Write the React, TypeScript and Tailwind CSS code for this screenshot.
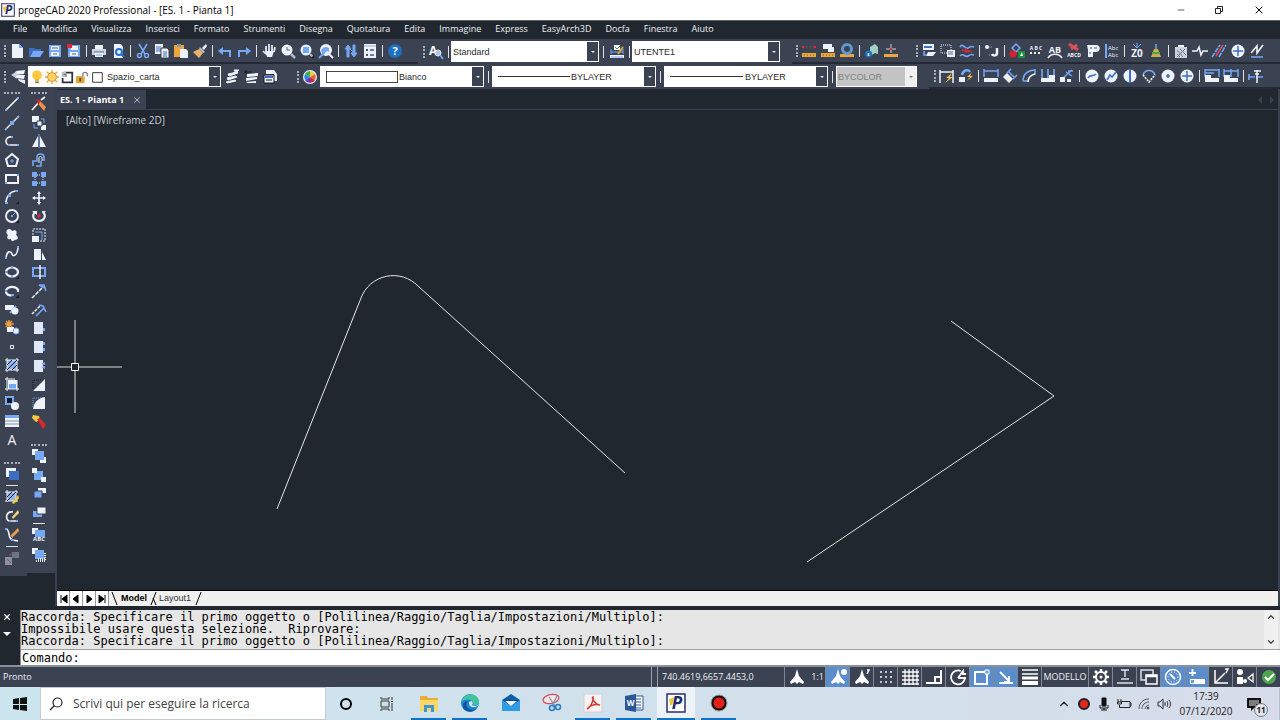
import React from 'react';
import { Minus, X, ChevronUp, ChevronDown } from 'lucide-react';

const W = '#eef2fb';
const B = '#76a8f8';
const D = '#3c6fc4';
const K = '#141a22';

const line = { fill: 'none', strokeWidth: 1.6 };

const icons: Record<string, React.ReactNode> = {
  // standard
  new: <><path d="M3 1h7l4 4v10H3z" fill={W} /><path d="M10 1v4h4z" fill={B} /></>,
  open: <><path d="M1 5h5l1 1h6v3H4l-2 5H1z" fill={D} /><path d="M5 8h11l-4 6H2z" fill={B} /></>,
  save: <><path d="M2 2h12v12H2z" fill={B} /><path d="M4 3h8v4H4zM4 9h8v4H4z" fill={W} /><path d="M5 5h6M6 11h4" stroke={D} /></>,
  saveAs: <><path d="M2 2h12v12H2z" fill={B} /><path d="M5 3h7v4H5zM4 9h8v4H4z" fill={W} /><path d="M6 11h4" stroke={D} /><path d="M1 1h5v4H1z" fill="#d8283a" /></>,
  print: <><path d="M4 2h8v4H4z" fill={W} /><path d="M1 6h14v6H1z" fill="#cfd6e4" /><path d="M4 9h8v5H4z" fill={W} /><path d="M3 9h10" stroke="#5b6678" /><path d="M5 12h6" stroke={B} /></>,
  preview: <><path d="M4 1h7l2 3v11H4z" fill={W} /><circle cx="9" cy="9" r="3" fill="none" stroke="#1f6fd0" strokeWidth="2" /><path d="M11 11l3 3" stroke="#1f6fd0" strokeWidth="2" /></>,
  cut: <><path d="M4 1l6 10M12 1L6 11" stroke={B} strokeWidth="1.6" /><circle cx="4.5" cy="12.5" r="2" fill="none" stroke={B} strokeWidth="1.5" /><circle cx="11.5" cy="12.5" r="2" fill="none" stroke={B} strokeWidth="1.5" /></>,
  copy: <><path d="M1 1h8v10H1z" fill={W} /><path d="M2 4h5M2 6h5M2 8h5" stroke={D} /><path d="M7 5h6l2 2v8H7z" fill={W} stroke="#3b4252" /><path d="M9 9h4M9 11h4M9 13h4" stroke={D} /></>,
  paste: <><path d="M1 2h10v12H1z" fill="#eda63c" /><path d="M4 1h4v3H4z" fill="#8c93a3" /><path d="M7 6h6l2 2v7H7z" fill={W} /></>,
  brush: <><path d="M10 5l4-4 1 2-3 4z" fill={W} /><path d="M8 4l5 5-2 1-4-4z" fill="#b9c0cc" /><path d="M7 6l4 4-4 5-6-6z" fill="#e2b568" /></>,
  undo: <path d="M6 4L1 8l5 4V9h6v5h2V7H6z" fill={B} />,
  redo: <path d="M10 4l5 4-5 4V9H4v5H2V7h8z" fill={B} />,
  pan: <><path d="M5 3v5M8 1v7M11 2v6M14 4l-1 5M2 8l3 3" stroke={W} strokeWidth="1.7" fill="none" /><path d="M4 8h9l-2 6H6z" fill={W} /></>,
  zoomWin: <><circle cx="7" cy="7" r="5.5" fill={W} /><path d="M7 4v3h3" stroke="#5b6678" fill="none" /><path d="M11 11l4 4" stroke="#b3bac8" strokeWidth="2.5" /></>,
  zoomExt: <><circle cx="7" cy="7" r="5.5" fill={W} /><path d="M4 4h6v6H4z" fill={B} /><path d="M11 11l3 3" stroke="#b3bac8" strokeWidth="2" /><path d="M12 15h3v-3z" fill={K} /></>,
  zoomPrev: <><circle cx="8" cy="7" r="6" fill={W} /><path d="M3 8c1-4 5-5 8-3v4L9 8 5 12z" fill={B} /><path d="M11 11l4 4" stroke={W} strokeWidth="2" /><path d="M1 15l5-5" stroke={B} strokeWidth="2" /></>,
  refresh: <path d="M4 14V6H2l3-4 3 4H6v8zM10 2h2v8h2l-3 4-3-4h2zM7 6l3 3" fill={B} stroke={B} />,
  props: <><path d="M2 1h12v14H2z" fill={W} /><path d="M2 3h12" stroke="#9fa8b8" /><path d="M4 6h2v2H4zM4 11h2v2H4z" fill="#4c5870" /><path d="M8 7h4M8 12h4" stroke="#4c5870" strokeWidth="1.5" /></>,
  help: <><circle cx="8" cy="8" r="7" fill="#1b70c4" /><text x="8" y="12" fontSize="11" fontWeight="bold" textAnchor="middle" fill="#fff">?</text></>,
  // styles
  textStyle: <><text x="1" y="11" fontSize="12" fontWeight="bold" fill="#fff">A</text><circle cx="10" cy="9" r="3" fill="#a9c4ee" stroke={W} /><path d="M12 11l3 4" stroke={B} strokeWidth="2" /></>,
  dimStyle: <><path d="M2 5v5M14 5v5M2 8h12" stroke={B} /><path d="M5 1h6v5H5z" fill={W} /><path d="M6 3l2 2 3-3" stroke="#35a04a" fill="none" /><path d="M9 10l5-7" stroke="#e2a43c" strokeWidth="2" /><path d="M1 11h14v3H1z" fill={W} /><path d="M2 13h12" stroke={B} /></>,
  distance: <><path d="M1 10h14v4H1z" fill="#eda63c" /><path d="M3 12h1M6 12h1M9 12h1M12 12h1" stroke="#7a5212" /><path d="M2 4h12" stroke="#8a4450" strokeDasharray="2 1" /><path d="M1 3h2v2H1zM13 3h2v2h-2z" fill="#e2283a" /></>,
  area: <><path d="M1 10h14v4H1z" fill="#eda63c" /><path d="M3 12h1M6 12h1M9 12h1M12 12h1" stroke="#7a5212" /><path d="M3 1h9v3h2v5H8V6H3z" fill={W} /></>,
  massProp: <><path d="M1 11h14v3H1z" fill="#eda63c" /><circle cx="8" cy="6" r="4.5" fill="none" stroke="#5e9ad0" strokeWidth="3" /></>,
  listInfo: <><path d="M6 4l5-3v9l-5 3zM11 1l3 3v7l-3-1z" fill="#9fd0c8" /><circle cx="4.5" cy="11" r="3.5" fill="#1b70c4" /><path d="M4.5 10v3" stroke="#fff" strokeWidth="1.5" /></>,
  idPoint: <><path d="M1 11h14v3H1z" fill="#eda63c" /><path d="M8 1v9M3 6h10" stroke="#d8cfd8" /><path d="M7 5h2v2H7z" fill="#e2283a" /></>,
  attach: <><path d="M2 1h11v6H2z" fill={W} /><path d="M3 4h8" stroke={D} strokeWidth="2" /><path d="M7 9h8l-3 4H5z" fill={W} /><path d="M3 8v4h3" stroke={B} {...line} /></>,
  clip: <><path d="M1 2h10v8H1z" fill="none" stroke={W} strokeDasharray="1 1" /><path d="M7 7h8v7H7z" fill={W} /><path d="M8 9h5M8 11h5" stroke="#5b6678" /></>,
  adjust: <><path d="M1 4c3-5 5 3 8 1s4-2 6-1M1 13c3-4 5 2 8 0s4-2 6-1" stroke={B} {...line} /><path d="M3 8c2-3 4 2 6 0l4 1M7 5v4l4-1" stroke="#d8283a" {...line} /></>,
  frame: <><circle cx="3" cy="4" r="2" fill={W} /><path d="M5 4h4M5 12h5" stroke={B} strokeDasharray="1 1" /><path d="M13 5v5c0 3-4 3-5 1" fill="none" stroke={W} strokeWidth="2.5" /></>,
  // express
  shapes: <><path d="M7 1l4 4-4 4-4-4z" fill="none" stroke={B} strokeWidth="1.5" /><circle cx="4" cy="11" r="3.5" fill="#d82030" /><path d="M9 8h7v7H9z" fill="#18903a" /><path d="M11 13l2-4 1 4z" fill={W} /></>,
  dots: <><path d="M2 10h12" stroke={W} strokeWidth="2" strokeDasharray="2 2" /><text x="8" y="7" fontSize="5" fill={W} fontWeight="bold" textAnchor="middle">A B C</text></>,
  arcText: <><text x="8" y="10" fontSize="9" textAnchor="middle" fill={W} fontWeight="bold">AB</text><path d="M1 15c3-5 11-5 14 0" stroke={W} {...line} /></>,
  explode: <><path d="M3 1l9 6M5 6l6-4" stroke="#d8505a" strokeWidth="3" /><text x="8" y="14" fontSize="5" textAnchor="middle" fill={W} fontWeight="bold">ABCD</text></>,
  numbering: <><path d="M2 2h9c5 0 5 7 0 7H8v5H3V7z" fill={W} /><path d="M5 5h2M9 5h3M4 10h2" stroke="#4c5870" /></>,
  abcAlign: <><path d="M2 1v14" stroke={B} strokeWidth="2" /><text x="4" y="7" fontSize="6" fill={W}>Abc</text><text x="4" y="14" fontSize="6" fill={W}>Abc</text></>,
  zZero: <><text x="8" y="14" fontSize="10" textAnchor="middle" fill={W} fontWeight="bold">Z0</text><path d="M4 1l4 4 4-4M8 0v4" stroke={B} fill="none" /></>,
  purge: <><path d="M8 1v6" stroke={B} strokeWidth="1.5" /><path d="M6 6h4l3 8H3z" fill="#c8b04a" /><path d="M4 10h8" stroke="#58a048" strokeWidth="2" /></>,
  hatchBag: <><path d="M5 2h6v3H5z" fill={W} /><path d="M2 4h12v11H2z" fill="#cdd3dd" /><path d="M4 7l6 7M4 11l3 3M7 6l6 6M12 6l-8 8" stroke="#6c7688" /></>,
  breakLine: <path d="M0 8h5l2-4 2 8 2-4h5" stroke={W} {...line} />,
  parallel: <><path d="M1 14L9 2M8 14L15 2" stroke={B} strokeWidth="1.5" strokeDasharray="5 1" /><path d="M5 13l7-11" stroke="#d8505a" strokeWidth="1.5" /></>,
  center: <><circle cx="8" cy="8" r="6.5" fill={W} /><path d="M8 3v10M3 8h10" stroke={D} strokeWidth="1.5" /></>,
  superLine: <><path d="M2 10L8 3v7l6-8" stroke={W} {...line} /><path d="M2 14h12" stroke={B} strokeWidth="1.5" /></>,
  // layers / colours
  layers: <><path d="M6 2l9-1-1 4-10 1zM5 6l10 0-1 4-9-1zM8 10l7 1v4l-6-3z" fill={W} /><path d="M1 6l6-4-1 7z" fill="#cbd3e0" /></>,
  layerCur: <path d="M4 5l9-2 1 1-9 3zM3 9l9-2 1 1-9 3zM2 13l9-2 1 1-9 2zM10 1h5l-3 3z" fill={W} stroke={W} />,
  layerPrev: <><path d="M4 5l11-1v3L4 8zM3 9l11-1v2L3 12zM3 13l10-1v2H4z" fill={W} /><path d="M1 3h8M4 1L2 3l2 2" stroke={K} fill="none" /></>,
  layerState: <><path d="M4 1h8l3 4v7h-3V5H4z" fill={W} /><path d="M2 6h10v8H2z" fill={W} stroke={K} /><path d="M3 8h8" stroke={D} strokeWidth="2" /><path d="M4 11h6" stroke={K} /></>,
  colors: <><circle cx="8" cy="8" r="7" fill={W} /><path d="M8 8V2a6 6 0 0 1 5 3z" fill="#e8d040" /><path d="M8 8l5-3a6 6 0 0 1 0 6z" fill="#e06a28" /><path d="M8 8l5 3a6 6 0 0 1-5 3z" fill="#c02858" /><path d="M8 8v6a6 6 0 0 1-5-3z" fill="#6838c0" /><path d="M8 8l-5 3a6 6 0 0 1 0-6z" fill="#2888e0" /><path d="M8 8L3 5a6 6 0 0 1 5-3z" fill="#38b048" /></>,
  bulb: <><circle cx="8" cy="6" r="5.5" fill="#ffc83c" /><path d="M6 10h4v3H6z" fill="#f0b030" /><path d="M6 14h4" stroke="#777" strokeWidth="2" /></>,
  sun: <><path d="M8 0v16M0 8h16M2 2l12 12M14 2L2 14" stroke="#e8a83c" strokeWidth="1.5" /><circle cx="8" cy="8" r="5" fill="#ffd25e" stroke="#d89020" /></>,
  vpFreeze: <><path d="M5 3h9v11H3V9" fill="none" stroke="#2c313a" strokeWidth="2" /><path d="M2 2h5v6H2z" fill="#b9c0cc" /><path d="M4 5h3v3" stroke="#555" fill="none" /></>,
  lock: <><path d="M9 7V4a3 3 0 0 1 5 0v3" fill="none" stroke="#7a7f88" strokeWidth="1.5" /><path d="M1 7h10v8H1z" fill="#dfa63a" /><path d="M6 9v4" stroke="#5c430f" strokeWidth="2" /></>,
  swatch: <path d="M3 3h11v11H3z" fill="#fff" stroke="#222" />,
  // dimensions
  quickDim: <><path d="M1 2v13M14 2v13M1 4h13" stroke={W} strokeWidth="1.5" /><path d="M13 5l-6 5h3l-4 5 8-6h-3z" fill="#f0c050" /></>,
  dimUpdate: <><path d="M1 9h6v5H1z" fill={W} /><path d="M4 7c1-5 6-6 8-3" stroke={B} strokeWidth="2.5" fill="none" /><path d="M14 4l-5 5h3l-3 4 6-5h-3z" fill="#f0c050" /></>,
  linear: <><path d="M1 3h14M1 1v8M15 1v8" stroke={B} strokeWidth="1.5" /><path d="M1 10h14v4H1z" fill={W} /></>,
  aligned: <><path d="M1 9l4-4 6 6-4 4z" fill={W} /><path d="M6 3l7 7M5 5l4-4M11 11l4-4" stroke={B} strokeWidth="1.5" /></>,
  arcLen: <><path d="M2 13C2 6 7 2 14 2M2 13h6M14 1v6" stroke={B} {...line} /><path d="M7 14c0-4 3-7 7-8" stroke={W} {...line} /></>,
  ordinate: <><path d="M2 1v9M8 1v9M14 1v7" stroke={B} {...line} /><path d="M1 10h14v4H1zM9 7h6v4H9z" fill={W} /></>,
  jogged: <><path d="M1 9h5v5H1zM8 11h4v3H8z" fill={W} /><path d="M5 9L13 2M7 4l6 4M9 3h5" stroke={B} strokeWidth="1.5" /></>,
  radius: <><circle cx="8" cy="8" r="6.5" fill={W} /><path d="M4 10c2-4 5-1 8-4" stroke={D} {...line} /></>,
  diameter: <><circle cx="8" cy="8" r="6.5" fill={W} /><path d="M4 12l3-5 2 2 4-5" stroke={D} {...line} /></>,
  diameter2: <><circle cx="8" cy="8" r="6.5" fill={W} /><path d="M8 1v14" stroke={D} strokeWidth="2" /></>,
  angular: <><path d="M2 7c2-6 10-6 12 0" stroke={B} {...line} /><path d="M2 7l6 7 6-7" stroke={W} strokeDasharray="2 1" {...line} /></>,
  centerMark: <><circle cx="8" cy="8" r="6.5" fill={W} /><path d="M8 6v4M6 8h4" stroke={D} strokeWidth="1.5" /></>,
  baseline: <><path d="M1 2h14M1 5h9M1 1v8M15 1v8" stroke={B} strokeWidth="1.5" /><path d="M1 10h14v4H1zM1 7h6v4H1z" fill={W} /></>,
  contin: <><path d="M1 3h14M1 1v8M8 1v8M15 1v8" stroke={B} strokeWidth="1.5" /><path d="M1 10h14v4H1zM1 7h6v4H1z" fill={W} /></>,
  dimSpace: <><path d="M1 6v6M1 9h6M8 9h7" stroke={B} {...line} /><path d="M9 2v13M6 3h7M7 6h4" stroke={W} strokeWidth="1.5" /></>,
  // draw
  line: <><path d="M2 14L14 2" stroke={W} strokeWidth="1.7" /><path d="M1 13h2v2H1zM13 1h2v2h-2z" fill={B} /></>,
  xline: <><path d="M1 15L15 1" stroke={W} strokeWidth="1.5" /><path d="M6 6h4v4H6zM1 13h2v2H1zM13 1h2v2h-2z" fill={B} /></>,
  polyline: <><path d="M8 4C0 3 1 12 5 12h9" stroke={W} {...line} /><path d="M7 3h2v2H7zM4 11h2v2H4zM13 11h2v2h-2z" fill={B} /></>,
  polygon: <><path d="M8 2l6 5-2 7H4L2 7z" stroke={W} fill="none" strokeWidth="2" /><path d="M8 7v4M6 9h4" stroke={B} /></>,
  rect: <><path d="M2 4h12v8H2z" stroke={W} fill="none" strokeWidth="2" /><path d="M13 3h2v2h-2zM1 11h2v2H1z" fill={B} /></>,
  arc: <><path d="M2 14C2 8 6 2 13 2" stroke={W} {...line} /><path d="M1 13h3v2H1zM4 5h3v3H4zM11 1h3v2h-3z" fill={B} /><path d="M12 15h3v-3z" fill={K} /></>,
  circle: <><circle cx="8" cy="8" r="6" fill="none" stroke={W} strokeWidth="1.8" /><path d="M7 7h2v2H7z" fill={B} /><path d="M8 8l4-4" stroke={B} /><path d="M12 15h3v-3z" fill={K} /></>,
  cloud: <path d="M3 3c2-2 4-1 5 1 3-2 6 0 4 4 3 2 2 5-1 5-2 2-4 1-4-1-3 1-5-1-3-4-2-1-2-4-1-5z" fill={W} />,
  spline: <><path d="M2 13c1-8 5-7 6-4s5 2 6-6" stroke={W} {...line} /><path d="M1 12h2v2H1zM13 1h2v2h-2z" fill={B} /></>,
  ellipse: <><ellipse cx="8" cy="8" rx="6" ry="4.5" fill="none" stroke={W} strokeWidth="2.2" /><path d="M7 2h2v3H7zM1 7h2v2H1zM7 11h2v3H7z" fill={B} /><path d="M12 15h3v-3z" fill={K} /></>,
  ellArc: <><path d="M9 12C2 14 0 7 4 5s11-1 10 4" fill="none" stroke={W} strokeWidth="2.2" /><path d="M7 11h3v2H7zM1 7h2v2H1z" fill={B} /><path d="M12 15h3v-3z" fill={K} /></>,
  block: <><path d="M1 4h9v5H1z" fill={W} /><path d="M6 12l6-7" stroke={B} strokeWidth="2" /><circle cx="11" cy="10" r="3.5" fill={W} /></>,
  insert: <><path d="M5 0v9M1 4h9M2 1l6 6M8 1L2 7" stroke="#f0a040" strokeWidth="1.5" /><path d="M3 7h7v5H3z" fill={W} /><circle cx="12" cy="11" r="3" fill={W} stroke={B} /></>,
  point: <path d="M6.5 6.5h3v3h-3z" fill="none" stroke={W} />,
  hatch: <><path d="M3 3h10v10H3z" fill="#8fb4ee" /><path d="M3 1v14M13 1v14M1 3h14M1 13h14" stroke={W} /><path d="M3 8l5-5M3 13L13 3M8 13l5-5" stroke={K} /></>,
  boundary: <><path d="M4 4h9v9H4z" fill={W} /><path d="M5 8h7v5H5z" fill={B} /><path d="M3 1v14M13 4v11M1 13h14M1 3h10" stroke={W} /></>,
  region: <><path d="M2 2h7v7H2z" fill={K} stroke={B} strokeWidth="2" /><circle cx="11" cy="11" r="4" fill={W} /></>,
  table: <><path d="M1 2h14v3H1z" fill={B} /><path d="M1 5h14v9H1z" fill={W} /><path d="M1 8h14M1 11h14" stroke="#8a94a8" /></>,
  text: <text x="8" y="13" fontSize="14" textAnchor="middle" fill={W}>A</text>,
  drawOrder: <><path d="M2 2h10v9H2z" fill={W} /><path d="M5 5h10v9H5z" fill={D} /></>,
  hatchEdit: <><path d="M3 3h9v9H3z" fill="#8fb4ee" /><path d="M3 1v12M12 1v12M1 3h13M1 12h13" stroke={W} /><path d="M3 8l5-5M3 12l9-9" stroke={K} /><path d="M14 6l-6 8 2 1 5-6z" fill="#f2ce3c" /></>,
  plEdit: <><path d="M9 4C1 3 1 13 6 13h8" stroke={W} {...line} /><path d="M14 2l-6 7 1 2 6-6z" fill="#f0d478" /><path d="M5 12h2v2H5zM12 12h2v2h-2z" fill={B} /></>,
  splEdit: <><path d="M2 2c4 0 2 8 5 10s4 1 7 2" stroke={W} {...line} /><path d="M14 1L7 8l1 3 7-7z" fill="#eda050" /><path d="M1 1h2v2H1zM7 12h3v2H7z" fill={B} /></>,
  attEdit: <><path d="M1 7h7v8H1z" fill="#8a92a2" /><path d="M8 2h7v6H8z" fill="#6c7688" /><path d="M3 9l4 4M5 5l6-2" stroke="#a05058" /></>,
  // modify
  erase: <><path d="M1 14L9 5M10 4l4-3" stroke={W} strokeWidth="1.7" /><path d="M6 4l3 1 6 6-2 4-5-6z" fill="#f09048" /><path d="M5 3l5 2-3 4z" fill="#d02828" /></>,
  copyObj: <><path d="M1 1h7v6H1zM10 10h5v5h-5z" fill={W} /><path d="M6 6h5v5H6z" fill={W} stroke="#3b4252" /><path d="M10 4h3v4M3 9v4h4" stroke={B} fill="none" /></>,
  mirror: <><path d="M7 3v11H1zM9 3v11h6z" fill={W} /><path d="M8 1v14" stroke={B} /></>,
  offset: <><path d="M2 14V9h4V5c0-4 7-4 7 0v4M5 14h5V9" stroke={B} {...line} /><path d="M8 11V6c0-2 3-2 3 0v3" stroke={W} fill="none" /></>,
  array: <><path d="M1 1h5v5H1zM10 1h5v5h-5zM1 10h5v5H1zM10 10h5v5h-5z" fill={B} /><path d="M6 4h4M4 6v4M12 6v4M6 12h4" stroke={W} strokeDasharray="1 1" /></>,
  move: <><path d="M8 2v12M2 8h12" stroke={W} strokeWidth="1.7" /><path d="M8 1l2 3H6zM8 15l2-3H6zM1 8l3-2v4zM15 8l-3-2v4z" fill={W} /></>,
  rotate: <><path d="M4 4c-4 4-1 9 4 9s8-5 4-9" fill="none" stroke={W} strokeWidth="2" /><path d="M1 3h5v4zM11 3h4l-3 3z" fill={W} /><path d="M8 6v4M6 8h4" stroke="#d8283a" strokeWidth="1.5" /></>,
  scale: <><path d="M2 2h12v12H2z" fill="none" stroke={W} strokeDasharray="2 1" /><path d="M4 5h7v8" fill="none" stroke={B} /><path d="M1 9h7v6H1z" fill={W} /></>,
  stretch: <path d="M3 3h7v11H3zM11 6l4 8h-4z" fill={W} />,
  trim: <><path d="M2 4h12v8H2z" fill="none" stroke={B} strokeWidth="2" /><path d="M9 1v14" stroke={W} strokeWidth="1.5" /></>,
  extend: <><path d="M1 15L12 4" stroke={W} strokeDasharray="4 1" strokeWidth="1.5" /><path d="M8 2h5l2 6M8 2l6 3" stroke={B} {...line} /></>,
  breakObj: <><path d="M1 12l8-8" stroke={W} strokeWidth="1.5" strokeDasharray="3 1" /><path d="M5 14l8-8M8 3l4 1 3 6" stroke={B} {...line} /></>,
  chamferA: <><path d="M3 2h9v12H3z" fill="#dfe7f8" /><path d="M12 8h2v3h-2z" fill={B} /></>,
  chamferB: <><path d="M3 2h9v12H3z" fill="#dfe7f8" /><path d="M12 3h2v3h-2zM12 9h2v3h-2z" fill={B} /></>,
  chamferC: <><path d="M3 2h9v12H3z" fill="#dfe7f8" /><path d="M10 6l4-2v3zM10 9l4-1v3z" fill={B} /></>,
  chamfer: <><path d="M14 2v12H2z" fill={W} /><path d="M2 12V3h9" stroke={K} strokeDasharray="1 1" fill="none" /></>,
  fillet: <><path d="M14 2v12H2C3 7 7 3 14 2z" fill={W} /><path d="M2 12V3h9" stroke={B} strokeDasharray="1 1" fill="none" /></>,
  blast: <><path d="M2 1l6 1 1 4-4 2-4-4z" fill="#f2ce3c" /><path d="M6 5l3-1 6 7-3 4z" fill="#d82828" /></>,
  front: <><path d="M1 1h6v6H1zM9 9h6v6H9z" fill={W} /><path d="M4 3h9v9H4z" fill={B} /></>,
  back: <><path d="M3 4h9v9H3z" fill={B} /><path d="M1 1h5v5H1zM10 10h5v5h-5z" fill={W} /></>,
  above: <><path d="M7 3h8v5H7z" fill={W} /><path d="M3 6h8v7H3z" fill={B} stroke="#3b4252" /></>,
  under: <><path d="M2 7h9v6H2z" fill={B} /><path d="M6 3h9v7H6z" fill={W} stroke="#3b4252" /></>,
  textFront: <><path d="M1 1h6v6H1z" fill={W} /><path d="M4 3h10v7H4z" fill={B} /><text x="8" y="14" fontSize="6" textAnchor="middle" fill={W} fontWeight="bold">ABC</text></>,
  hatchBack: <><path d="M1 1h6v6H1z" fill={W} /><path d="M4 3h9v9H4z" fill={B} /><path d="M5 14h10M14 6v8M7 12h8" stroke={W} strokeDasharray="1 1" strokeWidth="2" /></>,
};

function Icon({ name, size = 'h-4 w-4' }: { name: string; size?: string }) {
  return (
    <svg viewBox="0 0 16 16" className={`shrink-0 overflow-visible ${size}`} aria-hidden="true">
      {icons[name]}
    </svg>
  );
}

function Tool({ name }: { name: string }) {
  return (
    <button type="button" aria-label={name} className="grid h-4 w-[19px] shrink-0 place-items-center hover:bg-[#56607a]">
      <Icon name={name} />
    </button>
  );
}

const Grip = () => <span className="mr-px ml-1 h-3 shrink-0 border-l-2 border-dotted border-[#a9b0bd]" />;

const Sep = ({ width = 'w-1.5' }: { width?: string }) => (
  <span className={`flex shrink-0 justify-center ${width}`}>
    <span className="h-3 w-px bg-[#dfe3ea]" />
  </span>
);

// "|" puts a divider between tools
function Tools({ items }: { items: string }) {
  return <>{items.split(' ').map((name, i) => (name === '|' ? <Sep key={i} /> : <Tool key={i} name={name} />))}</>;
}

interface ComboProps {
  label: string;
  value: string;
  width: string;
  indent: string;
  disabled?: boolean;
  children?: React.ReactNode;
}

function Combo({ label, value, width, indent, disabled, children }: ComboProps) {
  return (
    <div className={`relative h-[21px] shrink-0 border border-white ${disabled ? 'bg-[#c4c4c4]' : 'bg-white'} ${width}`}>
      <select
        aria-label={label}
        disabled={disabled}
        className={`block h-full w-full appearance-none bg-transparent pr-3 font-['Liberation_Sans',sans-serif] text-[9px] leading-3 outline-none ${indent} ${disabled ? 'text-[#808080]' : 'text-[#2b2b2b]'}`}
      >
        <option>{value}</option>
      </select>
      <span className="pointer-events-none absolute inset-y-0 left-px flex items-center gap-px">{children}</span>
      <span
        className={`pointer-events-none absolute inset-y-0 right-0 grid w-[11px] place-items-center ${disabled ? 'bg-[#f0f0f0]' : 'bg-[#3b4252]'}`}
      >
        <span className={`border-x-2 border-t-2 border-x-transparent ${disabled ? 'border-t-[#777]' : 'border-t-[#e5e8ee]'}`} />
      </span>
    </div>
  );
}

const Logo = ({ className }: { className: string }) => (
  <svg viewBox="0 0 20 20" className={`overflow-visible ${className}`} aria-hidden="true">
    <path d="M1 1h18v18H1z" fill="#fff" stroke="#2a2f6e" strokeWidth="1.5" />
    <path d="M3 6l6-2-3 8H4z" fill="#e3c93c" />
    <text x="11" y="16" fontSize="17" fontWeight="bold" fontStyle="italic" textAnchor="middle" fill="#23286b">P</text>
  </svg>
);

const menus = ['File', 'Modifica', 'Visualizza', 'Inserisci', 'Formato', 'Strumenti', 'Disegna', 'Quotatura', 'Edita', 'Immagine', 'Express', 'EasyArch3D', 'Docfa', 'Finestra', 'Aiuto'];

function Header() {
  return (
    <header>
      <div className="flex h-5 items-center bg-white pl-px text-black">
        <Logo className="h-3.5 w-3.5" />
        <h1 className="ml-[3px] flex-1 text-[10px]">progeCAD 2020 Professional - [ES. 1 - Pianta 1]</h1>
        <button type="button" aria-label="Riduci" className="grid w-10 place-items-center"><Minus className="h-2.5 w-2.5" strokeWidth={1.5} /></button>
        <button type="button" aria-label="Ripristina" className="grid w-9 place-items-center">
          <svg viewBox="0 0 10 10" className="h-2.5 w-2.5" fill="none" stroke="#222"><path d="M1.5 3.5h5v5h-5zM3.5 3V1.500h5v5H7" /></svg>
        </button>
        <button type="button" aria-label="Chiudi" className="grid w-[43px] place-items-center"><X className="h-3 w-3" strokeWidth={2} /></button>
      </div>
      <nav className="flex h-[19px] items-center gap-3.5 border-t border-[#59616c] bg-[#20272f] pb-0.5 pl-[13px] text-[9px] text-[#eef0f3]">
        {menus.map((m) => <button type="button" key={m}>{m}</button>)}
      </nav>
      <div className="flex h-[25px] bg-[#3b4252]">
        <div className="flex w-[418px] shrink-0 items-center border-b-2 border-[#232a35]">
          <Grip /><Tools items="new open save saveAs | print preview | cut copy paste brush | undo redo | pan zoomWin zoomExt zoomPrev | refresh props | help" />
        </div>
        <div className="flex w-[374px] shrink-0 items-center pl-px">
          <Grip /><Tool name="textStyle" />
          <Sep /><Combo label="Stile testo" value="Standard" width="w-[148px]" indent="pl-px" />
          <Sep width="w-2" /><Tool name="dimStyle" />
          <Sep /><Combo label="Stile quota" value="UTENTE1" width="w-[148px]" indent="pl-px" />
        </div>
        <div className="flex w-[120px] shrink-0 items-center border-b-2 border-[#232a35]">
          <Grip /><Tools items="distance area massProp | listInfo idPoint" />
        </div>
        <div className="flex flex-1 items-center border-b-2 border-[#232a35]">
          <Grip /><Tools items="attach clip adjust | frame | shapes dots arcText explode numbering abcAlign | zZero purge | hatchBag breakLine parallel center superLine" />
        </div>
      </div>
      <div className="flex h-[25px] bg-[#3b4252]">
        <div className="flex w-[292px] shrink-0 items-center gap-px">
          <Grip /><Tool name="layers" />
          <Combo label="Livello" value="Spazio_carta" width="w-[193px]" indent="pl-[78px]">
            {['bulb', 'sun', 'vpFreeze', 'lock', 'swatch'].map((n) => <Icon key={n} name={n} size="h-3.5 w-3.5" />)}
          </Combo>
          <div className="flex"><Tools items="layerCur layerPrev layerState" /></div>
        </div>
        <div className="flex w-[637px] shrink-0 items-center pl-px">
          <Grip /><Tool name="colors" />
          <div className="ml-px flex items-center">
            <Combo label="Colore" value="Bianco" width="w-[164px]" indent="pl-[78px]">
              <span className="ml-1 h-3 w-[72px] border border-[#444]" />
            </Combo>
            <Sep width="w-2" />
            <Combo label="Tipo linea" value="BYLAYER" width="w-[164px]" indent="pl-[78px]">
              <span className="ml-1 h-px w-[72px] bg-[#333]" />
            </Combo>
            <Sep width="w-2" />
            <Combo label="Spessore linea" value="BYLAYER" width="w-[164px]" indent="pl-20">
              <span className="ml-1 h-px w-[73px] bg-[#333]" />
            </Combo>
            <Sep width="w-2" />
            <Combo label="Stile di stampa" value="BYCOLOR" width="w-[81px]" indent="pl-px" disabled />
          </div>
        </div>
        <div className="flex flex-1 items-center border-b-2 border-[#232a35] pl-px">
          <Grip /><Tools items="quickDim dimUpdate | linear aligned arcLen ordinate jogged | radius diameter diameter2 angular centerMark center | baseline contin | dimSpace" />
        </div>
      </div>
    </header>
  );
}

const HGrip = () => <span className="mx-1 my-0.5 border-t-2 border-dotted border-[#a9b0bd]" />;
const HSep = () => <span className="mx-1.5 my-[3px] h-px bg-[#dfe3ea]" />;

function Stack({ items, height }: { items: string; height: string }) {
  return (
    <div className={`flex flex-col items-center justify-between ${height}`}>
      {items.split(' ').map((n) => <Tool key={n} name={n} />)}
    </div>
  );
}

function SideBars() {
  return (
    <aside className="flex w-[57px] shrink-0 items-start border-r-2 border-[#39404e]">
      <div className="flex w-[27px] flex-col bg-[#3b4252] pt-px pr-[3px] pb-2.5">
        <HGrip />
        <Stack height="h-[352px]" items="line xline polyline polygon rect arc circle cloud spline ellipse ellArc block insert point hatch boundary region table text" />
        <span className="h-3" />
        <HGrip />
        <Stack height="h-4" items="drawOrder" />
        <HSep />
        <Stack height="h-[54px]" items="hatchEdit plEdit splEdit" />
        <HSep />
        <Stack height="h-4" items="attEdit" />
      </div>
      <div className="flex w-7 flex-col bg-[#3b4252] pt-px pr-1 pb-2.5">
        <HGrip />
        <Stack height="h-[334px]" items="erase copyObj mirror offset array move rotate scale stretch trim extend breakObj chamferA chamferB chamferC chamfer fillet blast" />
        <span className="h-3" />
        <HGrip />
        <Stack height="h-[72px]" items="front back above under" />
        <HSep />
        <Stack height="h-9" items="textFront hatchBack" />
      </div>
    </aside>
  );
}

function Drawing() {
  return (
    <div className="relative min-h-0 flex-1 overflow-hidden">
      <p className="pt-[3px] pl-[9px] text-[10px] text-[#c9ccd0]">[Alto] [Wireframe 2D]</p>
      <svg className="absolute inset-0 h-full w-full" fill="none" stroke="#e4e6e8">
        <path d="M220 399L304 188A34.5 34.5 0 0 1 361 176L568 363" />
        <path d="M894 211L997 286L750 452" />
        <g stroke="#9a9fa3">
          <path d="M18 210v44M18 260v43M0 257h14M22 257h43" strokeWidth="1.5" />
          <path d="M14.5 253.5h7v7h-7z" stroke="#fff" />
        </g>
      </svg>
    </div>
  );
}

function SheetTabs() {
  return (
    <div className="flex h-4 shrink-0 items-stretch border-t border-black bg-[#f0f0ee] font-['Liberation_Sans',sans-serif] text-[9px] text-black">
      {['M3 1v8M9 1v8L4 5z', 'M7 1v8L2 5z', 'M3 1v8l5-4z', 'M2 1v8l5-4zM8 1v8'].map((d, i) => (
        <button type="button" key={d} aria-label={['Primo', 'Precedente', 'Successivo', 'Ultimo'][i]} className="grid w-[13px] place-items-center border-r border-[#999] bg-white">
          <svg viewBox="0 0 10 10" className="h-2.5 w-2.5"><path d={d} stroke="#000" /></svg>
        </button>
      ))}
      <svg viewBox="0 0 8 15" className="ml-0.5 h-full w-2" stroke="#000"><path d="M1 1l5 13" /></svg>
      <button type="button" className="px-0.5 font-bold">Model</button>
      <svg viewBox="0 0 8 15" className="h-full w-2" stroke="#000" fill="none"><path d="M7 1L2 14M4 7l3 7" /></svg>
      <button type="button" className="px-0.5 text-[#333]">Layout1</button>
      <svg viewBox="0 0 8 15" className="ml-0.5 h-full w-2" stroke="#000"><path d="M6 1L1 14" /></svg>
    </div>
  );
}

function CommandLine() {
  return (
    <section className="flex h-[59px] shrink-0 border-b-2 border-[#8a919b] bg-[#20272f] pt-0.5">
      <div className="flex w-5 flex-col items-center gap-2.5 pt-0.5 pr-1.5 text-white">
        <button type="button" aria-label="Chiudi riga di comando"><X className="h-2.5 w-2.5" strokeWidth={3} /></button>
        <span className="border-x-4 border-t-4 border-x-transparent border-t-white" />
      </div>
      <div className="flex min-w-0 flex-1 flex-col border-l border-[#8a919b] font-['DejaVu_Sans_Mono',monospace] text-[12px] leading-3 text-black">
        <div className="flex flex-1 bg-[#e6e6e6] pr-0.5">
          <div className="flex-1 whitespace-pre pt-px">
            <p>Raccorda: Specificare il primo oggetto o [Polilinea/Raggio/Taglia/Impostazioni/Multiplo]:</p>
            <p>Impossibile usare questa selezione.  Riprovare:</p>
            <p>Raccorda: Specificare il primo oggetto o [Polilinea/Raggio/Taglia/Impostazioni/Multiplo]:</p>
          </div>
          <div className="flex w-3.5 flex-col items-center justify-between bg-[#f0f0f0] py-0.5 text-[#444]">
            <ChevronUp className="h-2.5 w-2.5" strokeWidth={3} />
            <ChevronDown className="h-2.5 w-2.5" strokeWidth={3} />
          </div>
        </div>
        <label className="flex h-4 items-center border-t border-[#a0a0a0] bg-white pl-px">
          Comando:
          <input type="text" className="ml-2 h-full flex-1 outline-none" />
        </label>
      </div>
    </section>
  );
}

const compass = 'M9 1l2 7 5 6-1 2-4-2-2 2-2-2-4 2-1-2 5-6z';

const modes: { name: string; on?: boolean; art: React.ReactNode }[] = [
  { name: 'Visibilità annotazioni', on: true, art: <><path d={compass} fill="#fff" /><circle cx="15" cy="4" r="3" fill="#fff" /></> },
  { name: 'Scala automatica', art: <><path d={compass} fill="#fff" /><path d="M14 2h2l-2 4" stroke="#fff" strokeWidth="1.5" fill="none" /></> },
  { name: 'Snap', art: <path d="M3 4h13M3 9h13M3 14h13" stroke="#c4cad5" strokeWidth="2" strokeDasharray="2 3" /> },
  { name: 'Griglia', art: <path d="M4 1v16M8 1v16M12 1v16M16 1v16M1 4h17M1 8h17M1 12h17M1 16h17" stroke="#fff" strokeWidth="1.3" /> },
  { name: 'Orto', art: <path d="M1 15h15V2M10 15V9h6" stroke="#fff" strokeWidth="2" fill="none" /> },
  { name: 'Polare', art: <path d="M16 10a7 7 0 1 1-4-7M9 10h8M9 10l5-7v3h3" stroke="#fff" strokeWidth="1.8" fill="none" /> },
  { name: 'Esnap', on: true, art: <><path d="M2 4h12v12H2z" stroke="#fff" strokeWidth="2" fill="none" /><path d="M12 2h4v4h-4z" fill="#6b9bd8" stroke="#fff" /></> },
  { name: 'Etrack', on: true, art: <path d="M3 4l9 9M2 15h14M12 8v6H7" stroke="#fff" strokeWidth="1.8" fill="none" /> },
  { name: 'Spessore', art: <><path d="M1 2h16M1 6h16" stroke="#fff" strokeWidth="1.5" /><path d="M1 10h16" stroke="#fff" strokeWidth="3" /><path d="M1 15h16" stroke="#fff" strokeWidth="4" /></> },
];

const extras: { name: string; on?: boolean; art: React.ReactNode }[] = [
  { name: 'Impostazioni', art: <><circle cx="9" cy="9" r="5" stroke="#fff" strokeWidth="2" fill="none" /><circle cx="9" cy="9" r="1.5" fill="#fff" /><path d="M9 1v3M9 14v3M1 9h3M14 9h3M3 3l2 2M13 13l2 2M15 3l-2 2M3 15l2-2" stroke="#fff" strokeWidth="2.5" /></> },
  { name: 'Testo', art: <path d="M5 2h8M9 2v7M5 11h8M1 15h16" stroke="#dde1e8" strokeWidth="1.5" /> },
  { name: 'Finestre', art: <><path d="M1 2h12v10H1z" stroke="#dde1e8" fill="none" strokeWidth="1.5" /><path d="M6 7h11v9H6z" fill="#3b4252" stroke="#fff" strokeWidth="1.5" /><path d="M6 8h11" stroke="#fff" strokeWidth="2.5" /></> },
  { name: 'Tempo', on: true, art: <><circle cx="9" cy="9" r="7.5" stroke="#fff" strokeWidth="1.5" fill="none" /><circle cx="9" cy="9" r="5" stroke="#fff" strokeDasharray="1 2" fill="none" /><path d="M6 6l5 5" stroke="#fff" strokeWidth="2" /></> },
  { name: 'Input dinamico', on: true, art: <><path d="M1 5h7M4.5 1v7" stroke="#fff" strokeWidth="1.8" /><path d="M2 11h15v5H2z" fill="#fff" /><path d="M3 12h3v3H3z" fill="#6b9bd8" /></> },
  { name: 'UCS dinamico', art: <path d="M3 2v13h13M3 15L13 5M13 1h3l-2 4" stroke="#fff" strokeWidth="1.5" fill="none" /> },
  { name: 'Isola', art: <><circle cx="4" cy="4" r="3" fill="#fff" /><path d="M1 9h6v7H1z" fill="#fff" /><circle cx="9" cy="13" r="2" fill="#fff" /><path d="M17 6v8l-5-4z" stroke="#fff" fill="none" strokeWidth="1.3" /></> },
  { name: 'Stato', art: <><circle cx="9" cy="9" r="7" fill="#4da54b" /><path d="M5 9l3 3 6-6" stroke="#fff" strokeWidth="2" fill="none" /></> },
];

function Mode({ name, on, children }: { name: string; on?: boolean; children: React.ReactNode }) {
  return (
    <button type="button" aria-label={name} aria-pressed={!!on} className={`grid w-6 shrink-0 place-items-center border-l border-[#808896] ${on ? 'bg-[#5b8dcc]' : ''}`}>
      <svg viewBox="0 0 18 18" className="h-[18px] w-[18px]">{children}</svg>
    </button>
  );
}

function StatusBar() {
  return (
    <footer className="flex h-5 shrink-0 items-stretch bg-[#3b4252] text-[9px] text-[#eef0f3]">
      <span className="flex flex-1 items-center pl-[3px]">Pronto</span>
      <span className="w-1.5 border-l border-[#9aa1ad]" />
      <span className="flex w-[127px] items-center border-l border-[#9aa1ad] pl-1">740.4619,6657.4453,0</span>
      <Mode name="Scala"><path d={compass} fill="#fff" /></Mode>
      <span className="flex w-[17px] items-center justify-end pr-px">1:1</span>
      {modes.map((m) => <Mode key={m.name} name={m.name} on={m.on}>{m.art}</Mode>)}
      <button type="button" className="w-[47px] border-l border-[#808896] text-center">MODELLO</button>
      {extras.map((m) => <Mode key={m.name} name={m.name} on={m.on}>{m.art}</Mode>)}
    </footer>
  );
}

const apps: { name: string; state: string; art: React.ReactNode }[] = [
  { name: 'Esplora file', state: 'border-[#1273c4]', art: <><path d="M1 3h7l1 2h10v13H1z" fill="#e9ae36" /><path d="M1 7h18v11H1z" fill="#fbd668" /><path d="M5 19v-7h10v7h-3v-4H8v4z" fill="#3c94d0" /></> },
  { name: 'Edge', state: 'border-[#1273c4]', art: <><circle cx="10" cy="10" r="9" fill="#1c86d2" /><path d="M1 9C3-1 19-1 19 9c0 3-4 4-6 3 2-5-6-8-12-3z" fill="#42c4a0" /><path d="M8 8c-4 4 0 11 8 8-5 5-13 2-13-3 0-4 3-5 5-5z" fill="#1255a4" /><path d="M9 9c3-2 5 1 3 3 2 2 5 1 7-1-1 4-11 5-10-2z" fill="#d6e8f4" /></> },
  { name: 'Posta', state: 'border-transparent', art: <><path d="M1 7l9-6 9 6v11H1z" fill="#0f5fa8" /><path d="M3 7h14v5H3z" fill="#0a4a86" /><path d="M1 7l9 6 9-6v11H1z" fill="#2f9de4" /><path d="M4 8h12l-6 5z" fill="#f4f7fa" /></> },
  { name: 'Cattura', state: 'border-transparent', art: <><ellipse cx="9" cy="6" rx="8" ry="4.5" fill="#f2e6ea" stroke="#cf4f5c" strokeWidth="1.3" transform="rotate(-12 9 6)" /><path d="M7 4l6 9M15 3l-5 10" stroke="#8a93a0" strokeWidth="1.3" /><circle cx="10" cy="15" r="2.5" fill="none" stroke="#2a7fc8" strokeWidth="1.6" /><circle cx="16" cy="14" r="2.5" fill="none" stroke="#2a7fc8" strokeWidth="1.6" /></> },
  { name: 'Acrobat', state: 'border-[#1273c4]', art: <><path d="M1 1h18v18H1z" fill="#f6f3f2" stroke="#d4cfcf" /><path d="M4 16c3-1 7-8 6-12-2 0 2 8 7 8-4-1-9 0-13 4z" fill="none" stroke="#d63a34" strokeWidth="1.5" /></> },
  { name: 'Word', state: 'border-[#1273c4]', art: <><path d="M10 3h9v14h-9z" fill="#fff" stroke="#2b569a" /><path d="M12 6h5M12 9h5M12 12h5M12 15h5" stroke="#2b569a" /><path d="M1 3l11-2v18L1 17z" fill="#2b569a" /><text x="6.5" y="13" fontSize="8" fontWeight="bold" textAnchor="middle" fill="#fff">W</text></> },
  { name: 'progeCAD', state: 'border-[#1273c4] bg-[#eef3f9]', art: null },
  { name: 'Registratore', state: 'border-[#1273c4]', art: <><circle cx="10" cy="10" r="8" fill="#111" stroke="#999" /><circle cx="10" cy="10" r="5.5" fill="#e8201c" /></> },
];

function Taskbar() {
  return (
    <div className="flex h-[33px] shrink-0 items-stretch bg-gradient-to-r from-[#cbe5ee] to-[#d6dcea] text-[#222]">
      <button type="button" aria-label="Start" className="grid w-10 place-items-center">
        <svg viewBox="0 0 14 14" className="h-3.5 w-3.5"><path d="M0 2l6-1v6H0zM7 1l7-1v7H7zM0 8h6v5l-6-1zM7 8h7v6l-7-1z" fill="#111" /></svg>
      </button>
      <label className="flex w-[286px] shrink-0 items-center gap-2.5 border border-[#c3ccd3] bg-white pl-2">
        <svg viewBox="0 0 14 14" className="h-3.5 w-3.5 shrink-0" fill="none" stroke="#222" strokeWidth="1.2"><circle cx="8.5" cy="5.5" r="4.5" /><path d="M5.5 8.5L1 13" /></svg>
        <input type="search" aria-label="Cerca" placeholder="Scrivi qui per eseguire la ricerca" className="w-full text-[12px] outline-none placeholder:text-[#444]" />
      </label>
      <button type="button" aria-label="Cortana" className="grid w-10 place-items-center"><span className="h-3 w-3 rounded-full border-2 border-black" /></button>
      <button type="button" aria-label="Visualizzazione attività" className="grid w-[41px] place-items-center">
        <svg viewBox="0 0 14 14" className="h-3.5 w-3.5" fill="none" stroke="#333"><path d="M1 4h8v6H1zM1 0v2h8V0M1 14v-2h8v2M12 0v3M12 6v8M11 4.5h2" /></svg>
      </button>
      <div className="flex gap-1.5 pl-1">
        {apps.map((a) => (
          <button type="button" key={a.name} aria-label={a.name} className={`grid place-items-center border-b-2 ${a.art ? 'w-[35px]' : 'w-[38px]'} ${a.state}`}>
            {a.art ? <svg viewBox="0 0 20 20" className="h-5 w-5">{a.art}</svg> : <Logo className="h-5 w-5" />}
          </button>
        ))}
      </div>
      <div className="ml-auto flex items-center">
        <button type="button" aria-label="Icone nascoste" className="grid w-5 place-items-center"><ChevronUp className="h-3.5 w-3.5" strokeWidth={2} /></button>
        <span className="grid w-5 place-items-center"><span className="h-3 w-3 rounded-full border-2 border-[#222] bg-[#e2281e]" /></span>
        <svg viewBox="0 0 20 16" className="h-4 w-5"><path d="M8 2h4v8H8z" stroke="#111" fill="#111" /><path d="M6 9v3h8V9M10 12v2M7 14h6" stroke="#111" fill="none" /></svg>
        <svg viewBox="0 0 20 16" className="h-4 w-5" fill="none" stroke="#222"><path d="M7 5.5h9v6H5.500V9M16 7h1v3h-1M4 3v3M7 3v3M3.5 6h4v2h-4z" /></svg>
        <svg viewBox="0 0 20 16" className="h-4 w-5" fill="none" stroke="#555"><path d="M5 13C5 7 9 3 15 3M8 13c0-4 3-7 7-7M11 13c0-2 2-4 4-4" /><circle cx="14" cy="12" r="1" fill="#222" /></svg>
        <svg viewBox="0 0 20 16" className="h-4 w-5" fill="none" stroke="#333"><path d="M4 6h2l3-3v10l-3-3H4zM11 6v4M13 5c1 2 1 4 0 6M15 4c2 3 2 5 0 8" /></svg>
        <p className="w-[64px] text-center text-[10px] leading-[15px]">17:39<br />07/12/2020</p>
        <button type="button" aria-label="Notifiche" className="relative grid w-8 place-items-center">
          <svg viewBox="0 0 14 14" className="h-3.5 w-3.5"><path d="M0 1h14v10H7l-3 3v-3H0z" fill="#111" /><path d="M2 4h10M2 6h10M2 8h7" stroke="#e5e9f2" /></svg>
          <span className="absolute top-1.5 left-4 grid h-3.5 w-3.5 place-items-center rounded-full border border-[#777] bg-[#dfe4ee] text-[8px] leading-none font-bold">11</span>
        </button>
        <span className="h-8 w-2.5 border-r border-[#b4bccb]" />
      </div>
    </div>
  );
}

export default function App() {
  return (
    <div className="flex h-screen flex-col overflow-hidden bg-[#20272e] font-['Open_Sans',sans-serif]">
      <Header />
      <div className="flex min-h-0 flex-1 pb-0.5">
        <SideBars />
        <main className="flex min-w-0 flex-1 flex-col border-r-2 border-[#39404e]">
          <div className="flex h-[21px] shrink-0 items-stretch border-b border-[#39404e] pt-px">
            <button type="button" className="flex items-center gap-2 bg-[#3b4252] pr-1 pl-[3px] text-[9px] font-bold text-white">
              ES. 1 - Pianta 1
              <X className="h-2.5 w-2.5 text-[#c3c8d1]" strokeWidth={2} />
            </button>
            <span className="ml-auto flex items-center gap-2 pr-1">
              <span className="border-y-4 border-r-4 border-y-transparent border-r-[#39404e]" />
              <span className="border-y-4 border-l-4 border-y-transparent border-l-[#39404e]" />
            </span>
          </div>
          <Drawing />
          <SheetTabs />
        </main>
      </div>
      <CommandLine />
      <StatusBar />
      <Taskbar />
    </div>
  );
}
